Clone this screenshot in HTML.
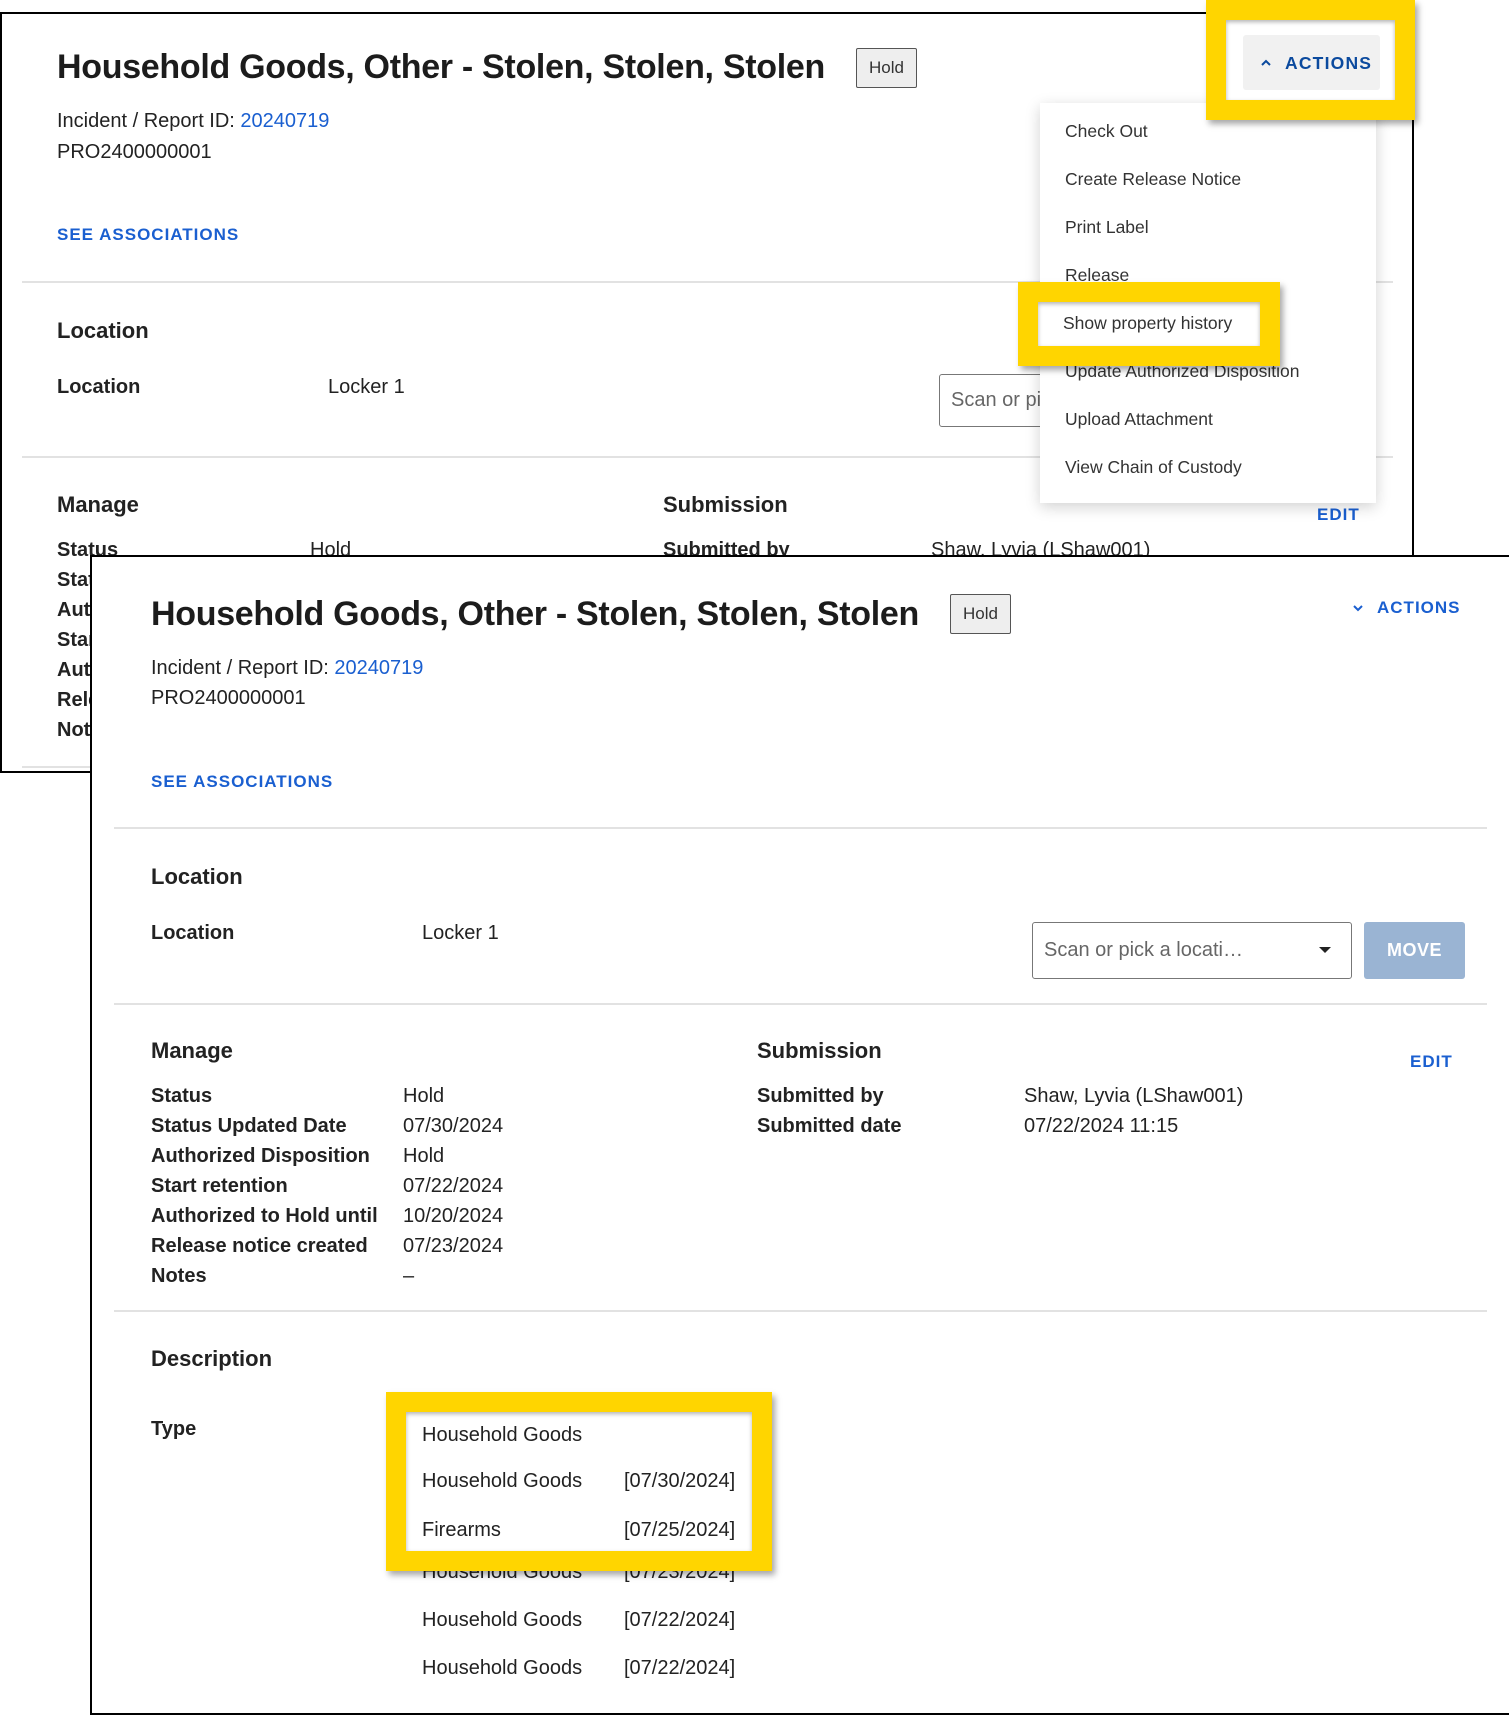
<!DOCTYPE html>
<html><head><meta charset="utf-8"><style>
*{margin:0;padding:0;box-sizing:border-box}
body{width:1509px;height:1700px;background:#fff;position:relative;overflow:hidden;font-family:"Liberation Sans",Arial,sans-serif;color:#222}
.a{position:absolute;white-space:nowrap}
.t{font-size:20px;line-height:24px}
.b{font-weight:bold}
.h{font-size:34px;line-height:40px;font-weight:bold;color:#1c1c1c;letter-spacing:-0.3px}
.s{font-size:22px;line-height:26px;font-weight:bold}
.lk{color:#1a5fd0}
.cap{font-size:17px;line-height:20px;font-weight:bold;color:#1a5fd0;letter-spacing:1px}
.hold{position:absolute;border:1.5px solid #555;background:#eee;border-radius:2px;font-size:17px;display:flex;align-items:center;justify-content:center;color:#333}
.hr{position:absolute;height:2px;background:#e2e2e2}
.card{position:absolute;background:#fff;overflow:hidden}
.mi{position:absolute;left:25px;font-size:17.5px;line-height:22px;color:#333;white-space:nowrap}
</style></head><body>

<!-- TOP CARD -->
<div class="card" style="left:0;top:12px;width:1414px;height:761px;border:2px solid #000">
 <div style="position:relative;left:-2px;top:-14px">
  <div class="a h" style="left:57px;top:47px">Household Goods, Other - Stolen, Stolen, Stolen</div>
  <div class="hold" style="left:856px;top:48px;width:61px;height:40px">Hold</div>
  <div class="a t" style="left:57px;top:109px">Incident / Report ID: <span class="lk">20240719</span></div>
  <div class="a t" style="left:57px;top:140px">PRO2400000001</div>
  <div class="a cap" style="left:57px;top:225px">SEE ASSOCIATIONS</div>
  <div class="hr" style="left:22px;top:281px;width:1371px"></div>
  <div class="a s" style="left:57px;top:318px">Location</div>
  <div class="a t b" style="left:57px;top:375px">Location</div>
  <div class="a t" style="left:328px;top:375px">Locker 1</div>
  <div class="a" style="left:939px;top:374px;width:200px;height:53px;border:1.5px solid #777;border-radius:3px;font-size:20px;color:#666;padding:14px 11px">Scan or pick a locati…</div>
  <div class="hr" style="left:22px;top:456px;width:1371px"></div>
  <div class="a s" style="left:57px;top:492px">Manage</div>
  <div class="a s" style="left:663px;top:492px">Submission</div>
  <div class="a cap" style="left:1317px;top:505px">EDIT</div>
  <div class="a t b" style="left:57px;top:538px">Status</div>
  <div class="a t" style="left:310px;top:538px">Hold</div>
  <div class="a t b" style="left:663px;top:538px">Submitted by</div>
  <div class="a t" style="left:931px;top:538px">Shaw, Lyvia (LShaw001)</div>
  <div class="a t b" style="left:57px;top:568px">Status</div>
  <div class="a t b" style="left:57px;top:598px">Authorized</div>
  <div class="a t b" style="left:57px;top:628px">Start</div>
  <div class="a t b" style="left:57px;top:658px">Authorized</div>
  <div class="a t b" style="left:57px;top:688px">Release</div>
  <div class="a t b" style="left:57px;top:718px">Notes</div>
  <div class="hr" style="left:22px;top:766px;width:1371px"></div>
 </div>
</div>

<!-- dropdown menu -->
<div class="a" style="left:1040px;top:103px;width:336px;height:400px;background:#fff;box-shadow:0 4px 14px rgba(0,0,0,.18)">
 <div class="mi" style="top:17px">Check Out</div>
 <div class="mi" style="top:65px">Create Release Notice</div>
 <div class="mi" style="top:113px">Print Label</div>
 <div class="mi" style="top:161px">Release</div>
 <div class="mi" style="top:257px">Update Authorized Disposition</div>
 <div class="mi" style="top:305px">Upload Attachment</div>
 <div class="mi" style="top:353px">View Chain of Custody</div>
</div>
<!-- yellow highlight on menu item -->
<div class="a" style="left:1018px;top:282px;width:262px;height:84px;border:20px solid #ffd500;box-shadow:3px 4px 6px rgba(0,0,0,.35)">
 <div style="position:absolute;left:0;top:0;width:222px;height:44px;background:#fff;box-shadow:inset 0 2px 4px rgba(0,0,0,.3)"></div>
 <div class="mi" style="left:25px;top:10px;font-size:17.5px">Show property history</div>
</div>
<!-- yellow actions -->
<div class="a" style="left:1206px;top:0;width:209px;height:120px;border:20px solid #ffd500;border-top-width:20px;box-shadow:3px 4px 6px rgba(0,0,0,.35)">
 <div style="position:absolute;left:0;top:0;width:169px;height:80px;background:#fff;box-shadow:inset 0 2px 4px rgba(0,0,0,.3)"></div>
 <div style="position:absolute;left:17px;top:15px;width:137px;height:55px;background:#f1f1f1;border-radius:3px"></div>
 <svg style="position:absolute;left:34px;top:38px" width="12" height="10" viewBox="0 0 12 10"><path d="M2 7 L6 3 L10 7" fill="none" stroke="#0b4a9e" stroke-width="2"/></svg>
 <div class="a" style="left:59px;top:33px;font-size:17.5px;font-weight:bold;color:#0b4a9e;letter-spacing:1.2px">ACTIONS</div>
</div>

<!-- BOTTOM CARD -->
<div class="card" style="left:90px;top:555px;width:1430px;height:1160px;border:2px solid #000">
 <div style="position:relative;left:-92px;top:-557px">
  <div class="a h" style="left:151px;top:594px">Household Goods, Other - Stolen, Stolen, Stolen</div>
  <div class="hold" style="left:950px;top:594px;width:61px;height:40px">Hold</div>
  <svg style="position:absolute;left:1352px;top:603px" width="12" height="10" viewBox="0 0 12 10"><path d="M2 3 L6 7 L10 3" fill="none" stroke="#1a5fd0" stroke-width="2"/></svg>
  <div class="a cap" style="left:1377px;top:598px">ACTIONS</div>
  <div class="a t" style="left:151px;top:656px">Incident / Report ID: <span class="lk">20240719</span></div>
  <div class="a t" style="left:151px;top:686px">PRO2400000001</div>
  <div class="a cap" style="left:151px;top:772px">SEE ASSOCIATIONS</div>
  <div class="hr" style="left:114px;top:827px;width:1373px"></div>
  <div class="a s" style="left:151px;top:864px">Location</div>
  <div class="a t b" style="left:151px;top:921px">Location</div>
  <div class="a t" style="left:422px;top:921px">Locker 1</div>
  <div class="a" style="left:1032px;top:922px;width:320px;height:57px;border:1.5px solid #777;border-radius:3px;font-size:20px;color:#666;padding:16px 11px">Scan or pick a locati…</div>
  <svg style="position:absolute;left:1318px;top:946px" width="14" height="8" viewBox="0 0 14 8"><path d="M1 1 L13 1 L7 7 Z" fill="#222"/></svg>
  <div class="a" style="left:1364px;top:922px;width:101px;height:57px;background:#9ab4d3;border-radius:3px;color:#fff;font-size:18px;font-weight:bold;text-align:center;line-height:57px;letter-spacing:.5px">MOVE</div>
  <div class="hr" style="left:114px;top:1003px;width:1373px"></div>
  <div class="a s" style="left:151px;top:1038px">Manage</div>
  <div class="a s" style="left:757px;top:1038px">Submission</div>
  <div class="a cap" style="left:1410px;top:1052px">EDIT</div>
  <div class="a t b" style="left:151px;top:1084px">Status</div><div class="a t" style="left:403px;top:1084px">Hold</div>
  <div class="a t b" style="left:151px;top:1114px">Status Updated Date</div><div class="a t" style="left:403px;top:1114px">07/30/2024</div>
  <div class="a t b" style="left:151px;top:1144px">Authorized Disposition</div><div class="a t" style="left:403px;top:1144px">Hold</div>
  <div class="a t b" style="left:151px;top:1174px">Start retention</div><div class="a t" style="left:403px;top:1174px">07/22/2024</div>
  <div class="a t b" style="left:151px;top:1204px">Authorized to Hold until</div><div class="a t" style="left:403px;top:1204px">10/20/2024</div>
  <div class="a t b" style="left:151px;top:1234px">Release notice created</div><div class="a t" style="left:403px;top:1234px">07/23/2024</div>
  <div class="a t b" style="left:151px;top:1264px">Notes</div><div class="a t" style="left:403px;top:1264px">–</div>
  <div class="a t b" style="left:757px;top:1084px">Submitted by</div><div class="a t" style="left:1024px;top:1084px">Shaw, Lyvia (LShaw001)</div>
  <div class="a t b" style="left:757px;top:1114px">Submitted date</div><div class="a t" style="left:1024px;top:1114px">07/22/2024 11:15</div>
  <div class="hr" style="left:114px;top:1310px;width:1373px"></div>
  <div class="a s" style="left:151px;top:1346px">Description</div>
  <div class="a t b" style="left:151px;top:1417px">Type</div>
  <div class="a t" style="left:422px;top:1560px">Household Goods</div><div class="a t" style="left:624px;top:1560px">[07/23/2024]</div>
  <div class="a t" style="left:422px;top:1608px">Household Goods</div><div class="a t" style="left:624px;top:1608px">[07/22/2024]</div>
  <div class="a t" style="left:422px;top:1656px">Household Goods</div><div class="a t" style="left:624px;top:1656px">[07/22/2024]</div>
  <div class="a" style="left:386px;top:1392px;width:386px;height:179px;border:20px solid #ffd500;box-shadow:3px 4px 6px rgba(0,0,0,.35)">
   <div style="position:absolute;left:0;top:0;width:346px;height:139px;background:#fff;box-shadow:inset 0 2px 4px rgba(0,0,0,.3)"></div>
   <div class="a t" style="left:16px;top:11px">Household Goods</div>
   <div class="a t" style="left:16px;top:57px">Household Goods</div><div class="a t" style="left:218px;top:57px">[07/30/2024]</div>
   <div class="a t" style="left:16px;top:106px">Firearms</div><div class="a t" style="left:218px;top:106px">[07/25/2024]</div>
  </div>
 </div>
</div>
</body></html>
